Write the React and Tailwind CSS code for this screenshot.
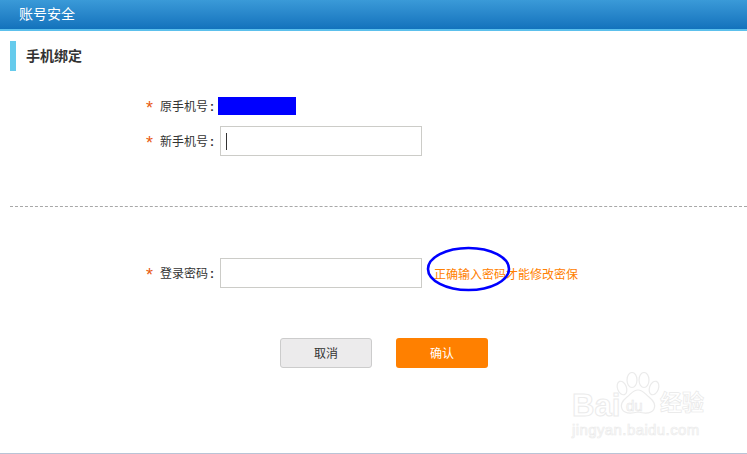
const FONT = "font-['Liberation_Sans','Noto_Sans_CJK_SC',sans-serif]";

const Label = ({ children }) => (
  <div className="flex w-[218px] shrink-0 items-center justify-end pr-[4px] text-[12px] text-[#333]">
    <span className="mb-[2px] mr-[7px] h-[12px] text-[18px] leading-[18px] text-[#e85a10]">*</span>
    <span className="pt-[2px]">{children}</span>
    <span className="ml-[2px] pt-[2px] font-bold">:</span>
  </div>
);

// Baidu jingyan watermark, lies over the page
const Watermark = () => (
  <div className="pointer-events-none absolute left-[572px] top-[372px] h-[70px] w-[140px] select-none">
    <svg className="absolute left-[44px] top-0" width="44" height="44" viewBox="0 0 44 44" fill="none" stroke="#ebebeb" strokeWidth="1.2">
      <ellipse cx="6" cy="16" rx="4.5" ry="7" transform="rotate(-20 6 16)" />
      <ellipse cx="16" cy="8" rx="5" ry="7.5" />
      <ellipse cx="28" cy="8" rx="5" ry="7.5" />
      <ellipse cx="38" cy="16" rx="4.5" ry="7" transform="rotate(20 38 16)" />
      <path d="M22 18c-5 0-7 4-11 7-5 4-7 8-5 12 2 4 8 5 16 3 8 2 14 1 16-3 2-4 0-8-5-12-4-3-6-7-11-7z" />
    </svg>
    <span className="absolute left-0 top-[18px] text-[31px] font-bold leading-none text-white [-webkit-text-stroke:1px_#ebebeb]">Bai</span>
    <span className="absolute left-[54px] top-[26px] text-[15px] leading-none text-white [-webkit-text-stroke:0.6px_#e6e6e6]">du</span>
    <span className="absolute left-[88px] top-[20px] text-[22px] font-bold leading-none text-white [-webkit-text-stroke:0.7px_#e8e8e8]">经验</span>
    <span className="absolute left-0 top-[50px] text-[15px] leading-none tracking-[0.4px] text-white [-webkit-text-stroke:0.7px_#ebebeb]">jingyan.baidu.com</span>
  </div>
);

export default function App() {
  return (
    <div className={`${FONT} relative h-[454px] w-[747px] overflow-hidden bg-white`}>
      {/* Header */}
      <div className="flex h-[31px] items-center border-b-2 border-[#5cc0ec] bg-gradient-to-b from-[#3a9ad8] to-[#1272bc] pl-[19px] text-[14px] text-white">
        账号安全
      </div>

      {/* Section title */}
      <div className="ml-[10px] mt-[10px] flex h-[30px] items-center border-l-[6px] border-[#66cbec] pl-[10px] text-[14px] font-bold text-[#333]">
        手机绑定
      </div>

      {/* Phone rows */}
      <div className="mt-[26px] flex h-[18px] items-center">
        <Label>原手机号</Label>
        <div className="h-[18px] w-[78px] bg-[#0000ff]" />
      </div>
      <div className="mt-[11px] flex h-[30px] items-center">
        <Label>新手机号</Label>
        <div className="ml-[2px] flex h-[30px] w-[202px] items-center border border-[#ccccc8] pl-[5px]">
          <div className="h-[17px] w-px bg-[#333]" />
        </div>
      </div>

      <div className="ml-[10px] mt-[50px] border-t border-dashed border-[#a8a8a8]" />

      {/* Password row */}
      <div className="mt-[51px] flex h-[30px] items-center">
        <Label>登录密码</Label>
        <div className="ml-[2px] h-[30px] w-[202px] border border-[#ccccc8]" />
        <span className="ml-[12px] pt-[3px] text-[12px] text-[#ff8000]">正确输入密码才能修改密保</span>
      </div>

      {/* Buttons */}
      <div className="ml-[280px] mt-[50px] flex gap-[24px] text-[12px]">
        <button className="h-[30px] w-[92px] rounded-[3px] border border-[#cccccc] bg-[#ecebec] pt-[2px] text-[#333]">取消</button>
        <button className="h-[30px] w-[92px] rounded-[3px] bg-[#ff8000] pt-[2px] text-white">确认</button>
      </div>

      {/* Hand-drawn annotation circle */}
      <svg className="absolute left-[426px] top-[245px]" width="88" height="48" viewBox="0 0 88 48" fill="none">
        <ellipse cx="42.5" cy="24" rx="40.5" ry="21" stroke="#0000ff" strokeWidth="2.6" />
      </svg>

      <Watermark />
      <div className="absolute bottom-0 left-0 h-px w-full bg-[#b9c4d6]" />
    </div>
  );
}
